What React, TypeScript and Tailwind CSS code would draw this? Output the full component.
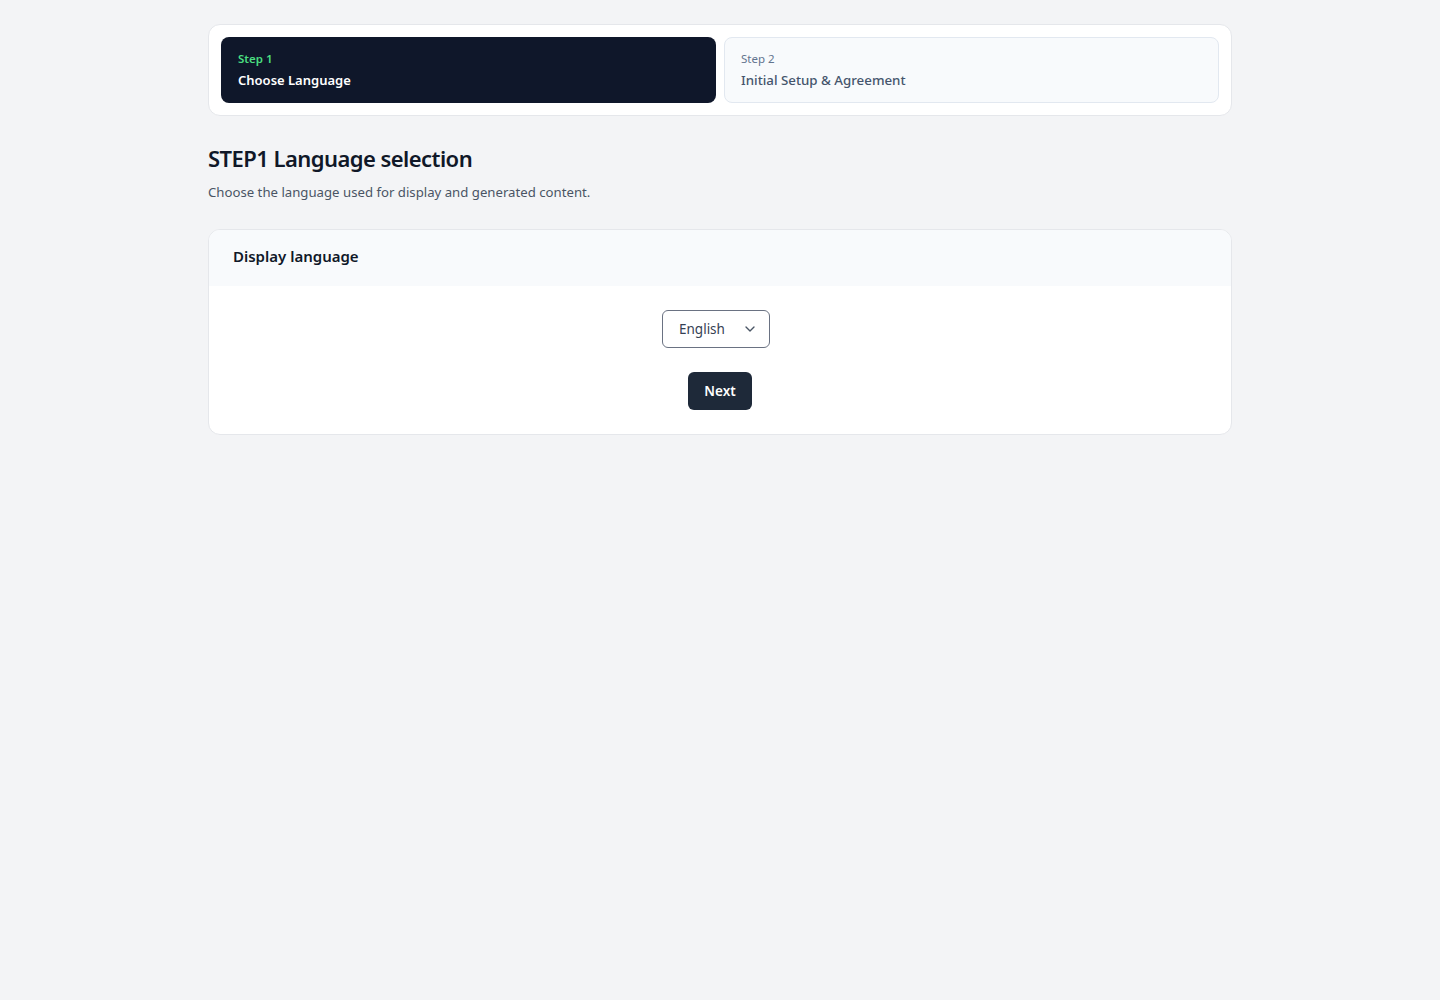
import { ChevronDown } from "lucide-react"

const steps = [
  { label: "Step 1", title: "Choose Language", active: true },
  { label: "Step 2", title: "Initial Setup & Agreement", active: false },
]

export default function App() {
  return (
    <div className="min-h-screen bg-[#f3f4f6] font-['Noto_Sans',sans-serif] text-gray-900">
      <div className="max-w-5xl mx-auto py-6">
        <div className="bg-white border border-gray-200 rounded-xl p-3 grid grid-cols-2 gap-2">
          {steps.map((s) =>
            s.active ? (
              <div key={s.label} className="bg-[#0f172a] rounded-lg px-[17px] h-[66px] flex flex-col justify-center">
                <div className="text-[11.5px] leading-4 font-semibold text-[#4ade80]">{s.label}</div>
                <div className="text-[13px] leading-5 font-semibold text-white mt-[3px]">{s.title}</div>
              </div>
            ) : (
              <div key={s.label} className="bg-slate-50 border border-slate-200 rounded-lg px-4 h-[66px] flex flex-col justify-center">
                <div className="text-[11.5px] leading-4 text-slate-500">{s.label}</div>
                <div className="text-[13.3px] leading-5 font-medium text-slate-600 mt-[3px]">{s.title}</div>
              </div>
            )
          )}
        </div>

        <h1 className="mt-[26px] text-[22px] leading-8 font-semibold text-gray-900 tracking-tight">STEP1 Language selection</h1>
        <p className="mt-2 text-[13.2px] leading-5 text-gray-600">Choose the language used for display and generated content.</p>

        <div className="mt-[27px] bg-white border border-gray-200 rounded-xl overflow-hidden">
          <div className="bg-slate-50 px-6 h-14 flex items-center pb-1">
            <h2 className="text-[15px] font-semibold text-gray-900">Display language</h2>
          </div>
          <div className="flex flex-col items-center gap-6 py-6">
            <div className="relative mr-2">
              <select className="appearance-none h-[38px] w-[108px] border border-gray-500 rounded-md bg-white pl-4 pr-8 text-[13.5px] text-gray-700">
                <option>English</option>
              </select>
              <ChevronDown className="absolute right-3 top-1/2 -translate-y-1/2 w-4 h-4 text-gray-600 pointer-events-none" />
            </div>
            <button className="h-[38px] px-4 rounded-md bg-gray-800 text-white text-[13.5px] font-semibold">Next</button>
          </div>
        </div>
      </div>
    </div>
  )
}
